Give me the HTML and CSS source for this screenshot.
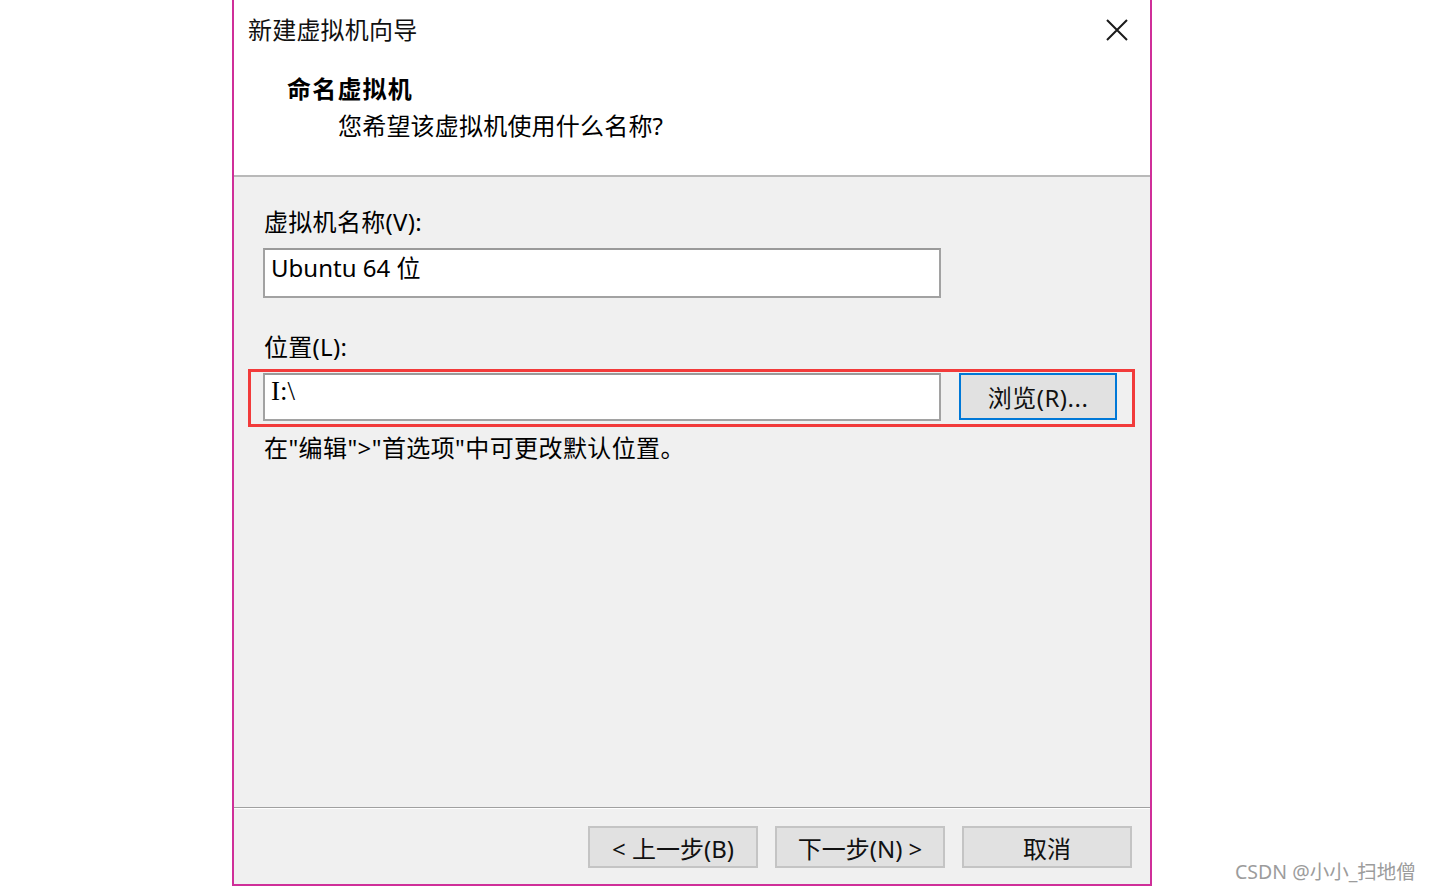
FILE: index.html
```html
<!DOCTYPE html>
<html lang="zh-CN">
<head>
<meta charset="utf-8">
<title>新建虚拟机向导</title>
<link rel="stylesheet" href="styles.css">
</head>
<body>
<div class="page">
  <div class="dialog">
    <div class="header">
      <div class="titlebar">
        <span class="title">新建虚拟机向导</span>
        <svg class="close" width="22" height="22" viewBox="0 0 22 22"><path d="M1 1 L21 21 M21 1 L1 21" stroke="#1a1a1a" stroke-width="2" fill="none"/></svg>
      </div>
      <div class="heading">命名虚拟机</div>
      <div class="subheading">您希望该虚拟机使用什么名称?</div>
    </div>
    <div class="body">
      <div class="label">虚拟机名称(V):</div>
      <div class="input input-name">Ubuntu 64 位</div>
      <div class="label label-loc">位置(L):</div>
      <div class="loc-row">
        <div class="input input-loc">I:\</div>
        <div class="btn btn-browse">浏览(R)...</div>
        <div class="highlight"></div>
      </div>
      <div class="hint">在"编辑"&gt;"首选项"中可更改默认位置。</div>
    </div>
    <div class="footer">
      <div class="btn btn-foot">&lt; 上一步(B)</div>
      <div class="btn btn-foot">下一步(N) &gt;</div>
      <div class="btn btn-foot">取消</div>
    </div>
  </div>
  <div class="watermark">CSDN @小小_扫地僧</div>
</div>
</body>
</html>
```

FILE: styles.css
```css
* { box-sizing: border-box; }
html, body {
  margin: 0;
  padding: 0;
  background: #ffffff;
}
body {
  font-family: "Noto Sans", "Noto Sans CJK SC", sans-serif;
  color: #000;
  width: 1431px;
  height: 892px;
  overflow: hidden;
}
.page {
  position: relative;
  width: 1431px;
  height: 892px;
  padding-left: 232px;
}
.dialog {
  width: 920px;
  height: 886px;
  border-left: 2px solid #cf2f99;
  border-right: 2px solid #cf2f99;
  border-bottom: 2px solid #cf2f99;
  display: flex;
  flex-direction: column;
  background: #f0f0f0;
}
.header {
  height: 177px;
  background: #ffffff;
  border-bottom: 2px solid #b9b9b9;
  padding-top: 14px;
}
.titlebar {
  display: flex;
  align-items: center;
  justify-content: space-between;
  height: 32px;
  padding-left: 14px;
  padding-right: 22px;
}
.title {
  font-size: 24px;
  line-height: 32px;
  color: #111;
  letter-spacing: 0.2px;
}
.close { display: block; }
.heading {
  margin-top: 27px;
  padding-left: 53px;
  font-size: 24px;
  line-height: 32px;
  font-weight: bold;
  letter-spacing: 1.2px;
}
.subheading {
  margin-top: 5px;
  padding-left: 104px;
  font-size: 24px;
  line-height: 32px;
  letter-spacing: 0.2px;
}
.body {
  height: 630px;
  padding-top: 30px;
  padding-left: 29px;
}
.label {
  font-size: 24px;
  line-height: 30px;
  padding-left: 1px;
  letter-spacing: 0.3px;
}
.input {
  width: 678px;
  background: #fff;
  border: 2px solid #a2a2a2;
  border-top-color: #9a9a9a;
  font-size: 24px;
  line-height: 30px;
  padding-left: 6px;
}
.input-name {
  margin-top: 11px;
  height: 50px;
  padding-top: 3px;
}
.label-loc { margin-top: 34px; }
.loc-row {
  position: relative;
  margin-top: 11px;
  display: flex;
  align-items: flex-start;
  gap: 18px;
}
.input-loc {
  height: 48px;
  padding-top: 1px;
  font-size: 27px;
  font-family: "Liberation Serif", "Noto Sans CJK SC", serif;
}
.btn {
  display: flex;
  align-items: center;
  justify-content: center;
  background: #e1e1e1;
  border: 2px solid #adadad;
  font-size: 24px;
  color: #111;
}
.btn-browse {
  width: 158px;
  height: 47px;
  border: 2px solid #0078d7;
  letter-spacing: 0.5px;
}
.highlight {
  position: absolute;
  left: -15px;
  top: -4px;
  width: 887px;
  height: 58px;
  border: 3px solid #f23b3b;
  pointer-events: none;
}
.hint {
  margin-top: 12px;
  font-size: 24px;
  line-height: 30px;
  padding-left: 1px;
  letter-spacing: 0.4px;
}
.footer {
  flex: 1;
  border-top: 1px solid #a0a0a0;
  box-shadow: inset 0 1px 0 #ffffff;
  display: flex;
  justify-content: flex-end;
  align-items: flex-start;
  gap: 17px;
  padding-top: 18px;
  padding-right: 18px;
}
.btn-foot {
  width: 170px;
  height: 42px;
  border: 2px solid #c4c4c4;
}
.watermark {
  position: absolute;
  left: 1235px;
  top: 859px;
  font-size: 19.5px;
  line-height: 26px;
  color: #9c9c9c;
}
```
